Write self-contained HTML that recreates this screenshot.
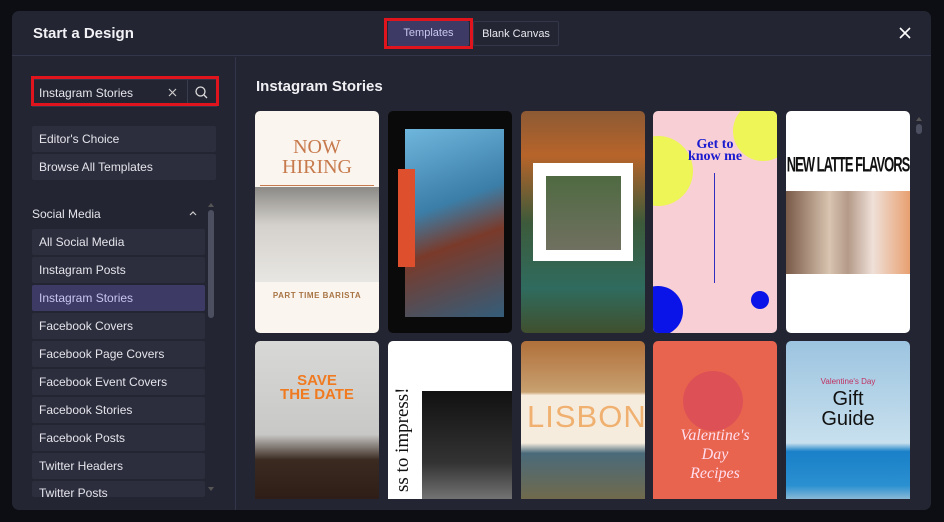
<!DOCTYPE html>
<html><head><meta charset="utf-8"><style>
*{box-sizing:border-box;margin:0;padding:0}
body{width:944px;height:522px;background:#0d0e13;font-family:"Liberation Sans",sans-serif;position:relative;overflow:hidden;color:#e6e6ee}
.modal{position:absolute;left:12px;top:11px;width:919px;height:499px;background:#232532;border-radius:7px;overflow:hidden}
.hdr{position:absolute;left:0;top:0;width:100%;height:45px;border-bottom:1px solid #33364a}
.title{position:absolute;left:21px;top:14px;font-size:15px;font-weight:bold;color:#f2f2f6}
.tab{position:absolute;top:10px;height:25px;font-size:11px;line-height:25px;text-align:center;border-radius:2px}
.t1{left:376px;width:81px;background:#3d3b66;color:#c9c7ef}
.t2{left:461px;width:86px;border:1px solid #34374a;color:#e8e8ee}
.red{position:absolute;border:3px solid #e0141c}
.side{position:absolute;left:0;top:46px;width:224px;height:453px;border-right:1px solid #33364a}
.item{position:absolute;left:20px;width:173px;height:26px;background:#2c2e3e;border-radius:2px;font-size:12px;line-height:26px;padding-left:7px;color:#e4e4ea;overflow:hidden}
.sel{background:#3d3a66;color:#c8c6f0}
.card{position:absolute;width:124px;border-radius:5px;overflow:hidden}
</style></head><body>
<div class="modal">
 <div class="hdr">
  <div class="title">Start a Design</div>
  <div class="tab t1">Templates</div>
  <div class="tab t2">Blank Canvas</div>
  <svg style="position:absolute;left:887px;top:16px" width="12" height="12"><path d="M1 1L11 11M11 1L1 11" stroke="#fff" stroke-width="1.6"/></svg>
 </div>
 <div class="side">
  <div style="position:absolute;left:20px;top:22px;width:185px;height:28px;background:#232532;border:1px solid #33364a"></div>
  <div style="position:absolute;left:27px;top:29px;font-size:12px;color:#e6e6ec">Instagram Stories</div>
  <svg style="position:absolute;left:156px;top:31px" width="9" height="9"><path d="M1 1L8 8M8 1L1 8" stroke="#ccc" stroke-width="1.2"/></svg>
  <div style="position:absolute;left:175px;top:23px;width:1px;height:26px;background:#3a3d50"></div>
  <svg style="position:absolute;left:183px;top:29px" width="13" height="13"><circle cx="5.5" cy="5.5" r="4.5" stroke="#ddd" stroke-width="1.3" fill="none"/><path d="M9 9L12 12" stroke="#ddd" stroke-width="1.3"/></svg>
  <div class="item" style="top:69px;width:184px">Editor's Choice</div>
  <div class="item" style="top:97px;width:184px">Browse All Templates</div>
  <div style="position:absolute;left:20px;top:150px;font-size:12px;color:#e4e4ea">Social Media</div>
  <svg style="position:absolute;left:177px;top:153px" width="8" height="6"><path d="M1 5L4 2L7 5" stroke="#ccc" stroke-width="1.2" fill="none"/></svg>
  <div style="position:absolute;left:196px;top:146px;width:6px;height:270px;"><div style="width:0;height:0;border-left:3px solid transparent;border-right:3px solid transparent;border-bottom:4px solid #555"></div><div style="margin-top:3px;width:6px;height:108px;background:#4c4f60;border-radius:3px"></div></div>
  <div class="item" style="top:172px">All Social Media</div>
  <div class="item" style="top:200px">Instagram Posts</div>
  <div class="item sel" style="top:228px">Instagram Stories</div>
  <div class="item" style="top:256px">Facebook Covers</div>
  <div class="item" style="top:284px">Facebook Page Covers</div>
  <div class="item" style="top:312px">Facebook Event Covers</div>
  <div class="item" style="top:340px">Facebook Stories</div>
  <div class="item" style="top:368px">Facebook Posts</div>
  <div class="item" style="top:396px">Twitter Headers</div>
  <div class="item" style="top:424px;height:16px;line-height:24px">Twitter Posts</div>
  <div style="position:absolute;left:196px;top:430px;width:0;height:0;border-left:3px solid transparent;border-right:3px solid transparent;border-top:4px solid #555"></div>
 </div>
 <div style="position:absolute;left:244px;top:67px;font-size:15px;font-weight:bold;color:#f0f0f4">Instagram Stories</div>
 <div style="position:absolute;left:243px;top:100px;width:660px;height:388px;overflow:hidden">
  <div class="card" style="left:0;top:0;height:222px;background:#faf5ee">
   <div style="position:absolute;top:26px;width:100%;text-align:center;font-family:'Liberation Serif',serif;font-size:20px;color:#c77a4d;line-height:20px">NOW<br>HIRING</div>
   <div style="position:absolute;top:74px;left:5px;width:114px;height:1px;background:#c77a4d"></div>
   <div style="position:absolute;top:76px;width:100%;height:95px;background:linear-gradient(#8c8a86,#d4d1cc 40%,#e8e6e2)"></div>
   <div style="position:absolute;top:180px;width:100%;text-align:center;font-size:8px;font-weight:bold;color:#a87444;letter-spacing:.5px">PART TIME BARISTA</div>
  </div>
  <div class="card" style="left:133px;top:0;height:222px;background:#0a0a0a">
   <div style="position:absolute;left:17px;top:18px;width:99px;height:188px;background:linear-gradient(160deg,#6fb6dc,#3b7ea8 40%,#7a3a2a 60%,#335d7a)"></div>
   <div style="position:absolute;left:10px;top:58px;width:17px;height:98px;background:#de4f2d"></div>
  </div>
  <div class="card" style="left:266px;top:0;height:222px;background:linear-gradient(#8c5a34,#b8642a 20%,#3d5a3a 50%,#2f6b5e 80%,#40502e)">
   <div style="position:absolute;left:12px;top:52px;width:100px;height:98px;background:#fff">
    <div style="position:absolute;left:13px;top:13px;width:75px;height:74px;background:linear-gradient(#4f6a42,#707060)"></div>
   </div>
  </div>
  <div class="card" style="left:398px;top:0;height:222px;background:#f8cfd4">
   <div style="position:absolute;left:-30px;top:25px;width:70px;height:70px;border-radius:50%;background:#eef556"></div>
   <div style="position:absolute;left:80px;top:-10px;width:60px;height:60px;border-radius:50%;background:#eef556"></div>
   <div style="position:absolute;left:-20px;top:175px;width:50px;height:50px;border-radius:50%;background:#0a14e8"></div>
   <div style="position:absolute;left:98px;top:180px;width:18px;height:18px;border-radius:50%;background:#0a14e8"></div>
   <div style="position:absolute;top:28px;width:100%;text-align:center;font-family:'Liberation Serif',serif;font-weight:bold;font-size:14px;line-height:12px;color:#1a1ad0">Get to<br>know me</div>
   <div style="position:absolute;left:61px;top:62px;width:1px;height:110px;background:#3030c0"></div>
  </div>
  <div class="card" style="left:531px;top:0;height:222px;background:#fff">
   <div style="position:absolute;top:46px;width:100%;text-align:center;font-size:13px;font-weight:bold;letter-spacing:-1px;color:#111;white-space:nowrap;transform:scaleY(1.6)">NEW LATTE FLAVORS</div>
   <div style="position:absolute;top:80px;width:100%;height:83px;background:linear-gradient(90deg,#7a5a48,#d8c4b0 35%,#b49a88 50%,#efe0d8 70%,#e8a070)"></div>
  </div>
  <div class="card" style="left:0;top:230px;height:170px;background:linear-gradient(#d8d8d6,#c8c8c6 55%,#3a2a20 70%,#2a1a14)">
   <div style="position:absolute;top:33px;width:100%;text-align:center;font-size:15px;font-weight:bold;color:#f07a20;line-height:14px">SAVE<br>THE DATE</div>
  </div>
  <div class="card" style="left:133px;top:230px;height:170px;background:#fff">
   <div style="position:absolute;left:34px;top:50px;width:90px;height:120px;background:linear-gradient(#111,#333 60%,#888)"></div>
   <div style="position:absolute;left:-50px;top:75px;width:130px;transform:rotate(-90deg);font-family:'Liberation Serif',serif;font-size:19px;color:#111">ss to impress!</div>
  </div>
  <div class="card" style="left:266px;top:230px;height:170px;background:linear-gradient(#b0703a,#c8a070 30%,#f6ecde 32%,#f6ecde 60%,#4a6a7a 66%,#7a6a40)">
   <div style="position:absolute;top:58px;left:6px;font-size:31px;color:#f0b070;letter-spacing:1px">LISBON</div>
  </div>
  <div class="card" style="left:398px;top:230px;height:170px;background:#e8644e">
   <div style="position:absolute;top:30px;left:30px;width:60px;height:60px;border-radius:50%;background:#d8485a;opacity:.7"></div>
   <div style="position:absolute;top:85px;width:100%;text-align:center;font-family:'Liberation Serif',serif;font-style:italic;font-size:16px;color:#fde;line-height:19px">Valentine's<br>Day<br>Recipes</div>
  </div>
  <div class="card" style="left:531px;top:230px;height:170px;background:linear-gradient(#9cc4e0,#c8e0ee 60%,#1a80c8 65%,#2a90d0 85%,#ddd)">
   <div style="position:absolute;top:36px;width:100%;text-align:center;font-size:8px;color:#c03060">Valentine's Day</div>
   <div style="position:absolute;top:48px;width:100%;text-align:center;font-size:20px;color:#111;line-height:20px">Gift<br>Guide</div>
  </div>
 </div>
 <div style="position:absolute;left:904px;top:106px;width:6px;"><div style="width:0;height:0;border-left:3px solid transparent;border-right:3px solid transparent;border-bottom:4px solid #555"></div><div style="margin-top:3px;width:6px;height:10px;background:#4c4f60;border-radius:3px"></div></div>
</div>
<div class="red" style="left:384px;top:18px;width:89px;height:31px"></div>
<div class="red" style="left:31px;top:76px;width:188px;height:30px"></div>
</body></html>
